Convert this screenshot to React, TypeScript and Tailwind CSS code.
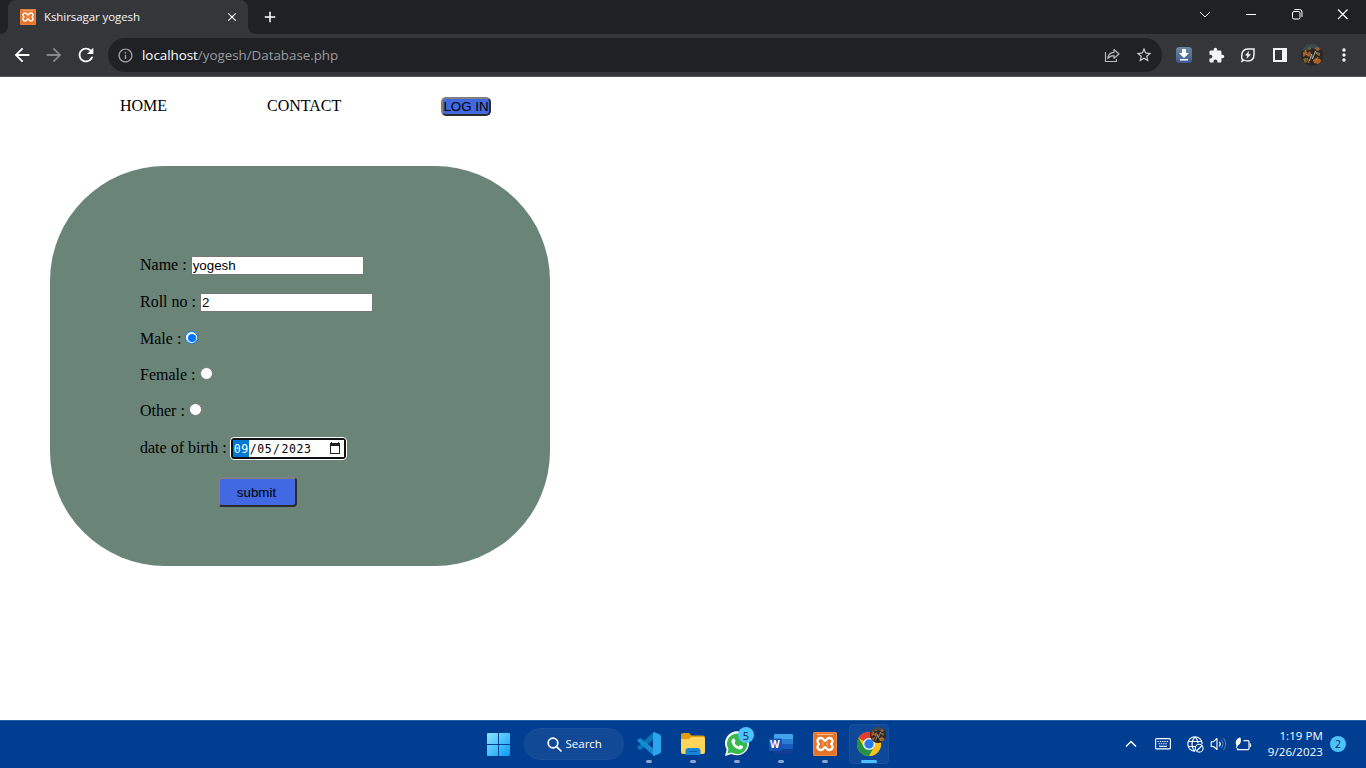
import React from "react";
import { MdArrowBack, MdArrowForward, MdRefresh, MdInfoOutline, MdStarBorder, MdExtension, MdMoreVert, MdAdd, MdClose } from "react-icons/md";

const UI = "font-['Open_Sans','Noto_Sans',sans-serif]";
const SERIF = "font-['Liberation_Serif',serif]";
const ARIAL = "font-['Liberation_Sans',sans-serif]";

function XamppIcon({ size }: { size: number }) {
  return (
    <svg width={size} height={size} viewBox="0 0 24 24">
      <rect width="24" height="24" rx="1.5" fill="#e8742a" />
      <rect x="0.5" y="0.5" width="23" height="23" rx="1.5" fill="none" stroke="#f08a45" />
      <path d="M4 2.500h16" stroke="#f8b98a" strokeWidth="1" />
      <path
        d="M12 8.800C10.500 8.800 10.500 6 7.900 6 5.800 6 4.500 7.300 4.500 9.200c0 1.300.7 2.100 1.500 2.800-.8.700-1.500 1.500-1.500 2.800 0 1.900 1.300 3.200 3.400 3.200 2.600 0 2.600-2.800 4.100-2.800s1.500 2.800 4.100 2.800c2.100 0 3.400-1.300 3.400-3.200 0-1.300-.7-2.100-1.500-2.800.8-.7 1.500-1.500 1.500-2.800 0-1.900-1.300-3.200-3.400-3.200-2.600 0-2.600 2.800-4.100 2.800Z"
        fill="none" stroke="#fff" strokeWidth="2.300" strokeLinejoin="round"
      />
      <path d="M9.200 9.800l1.300 2.200-1.300 2.200M14.800 9.800L13.500 12l1.300 2.200" fill="none" stroke="#fff" strokeWidth=".7" opacity=".6" />
    </svg>
  );
}

function Avatar({ size }: { size: number }) {
  return (
    <svg width={size} height={size} viewBox="0 0 22 22">
      <defs>
        <clipPath id={"av" + size}><circle cx="11" cy="11" r="11" /></clipPath>
      </defs>
      <g clipPath={"url(#av" + size + ")"}>
        <rect width="22" height="22" fill="#2c2722" />
        <path d="M0 0h22v5l-6 1-5-2-6 3-5-1Z" fill="#3d4b50" />
        <path d="M2 8l3-1 1 3 3-3 1 3-2 3-3-2-3 2ZM14 4l3-1 2 3-3 1ZM12 16l3-2 4 1 2 3-4 2-4-1Z" fill="#a7602c" />
        <path d="M2 15l3-1 1 4-2 1ZM16 8l3 1v3l-3-1ZM7 4l2-1 1 2-2 1Z" fill="#7d6b28" />
        <path d="M8.500 17l2-7 1 5 3-8 1 3" fill="none" stroke="#a5a596" strokeWidth="1" />
        <path d="M6 14l2 5M17 13l-3 5M4 6l2 3" stroke="#c47a2c" strokeWidth="1" />
      </g>
    </svg>
  );
}

function TitleBar() {
  return (
    <div className="flex h-[34px] bg-[#202124]">
      <div className="flex w-2 items-end bg-[#35363a]"><div className="h-full w-2 rounded-br-lg bg-[#202124]" /></div>
      <div className="flex w-60 items-center rounded-t-lg bg-[#35363a] pl-3 pr-[9px]">
        <XamppIcon size={16} />
        <span className={`${UI} ml-2 flex-1 whitespace-nowrap text-[11.5px] leading-4 tracking-[-0.08px] text-[#f4f4f5]`}>Kshirsagar yogesh</span>
        <MdClose size={14} color="#fff" />
      </div>
      <div className="w-2 bg-[#35363a]"><div className="h-full w-2 rounded-bl-lg bg-[#202124]" /></div>
      <div className="flex w-7 items-center justify-center"><MdAdd size={18} color="#fff" /></div>
      <div className="flex flex-1 justify-end">
        {[
          <path key="a" d="M6 8l5 5 5-5" />,
          <path key="b" d="M6 10.500h10" />,
          <g key="c"><rect x="6.500" y="7.500" width="7.500" height="7.500" rx="1.500" /><path d="M8.500 5.500h5a2.500 2.500 0 0 1 2.500 2.500v5" /></g>,
          <path key="d" d="M6 5.500l9.500 9.500M15.500 5.500L6 15" strokeWidth="1.200" />,
        ].map((icon, i) => (
          <div key={i} className="flex w-[46px] justify-center pt-[4px]">
            <svg width="22" height="22" viewBox="0 0 22 22" fill="none" stroke="#fff" strokeWidth="1">{icon}</svg>
          </div>
        ))}
      </div>
    </div>
  );
}

function Toolbar() {
  return (
    <div className="flex h-[43px] items-center border-b border-[#55565a] bg-[#35363a] px-1.5">
      <div className="flex w-8 justify-center"><MdArrowBack size={22} color="#fff" /></div>
      <div className="flex w-8 justify-center"><MdArrowForward size={22} color="#85868a" /></div>
      <div className="flex w-8 justify-center"><MdRefresh size={22} color="#fff" /></div>
      <div className="ml-1.5 flex h-[34px] flex-1 items-center rounded-full bg-[#202124] pl-[9px]">
        <MdInfoOutline size={17} color="#9aa0a6" />
        <span className={`${UI} ml-2 flex-1 whitespace-nowrap text-[13.4px] leading-5 tracking-[-0.03px] text-[#9a9b9e]`}>
          <span className="text-white">localhost</span>/yogesh/Database.php
        </span>
        <div className="flex w-8 justify-center">
          <svg width="18" height="18" viewBox="0 0 18 18" fill="none" stroke="#b6b8bb" strokeWidth="1.200">
            <path d="M2.500 6v9.500h11V13" />
            <path d="M4.800 12.500C5.200 8.500 7.500 6.500 11 6.300V3.500L16 8l-5 4.300V9.600c-2.800 0-4.700.9-6.200 2.900Z" strokeLinejoin="round" />
          </svg>
        </div>
        <div className="mr-0.5 flex w-8 justify-center"><MdStarBorder size={18} color="#c8cacd" /></div>
      </div>
      <div className="ml-1.5 flex w-8 justify-center">
        <svg width="16" height="16" viewBox="0 0 16 16">
          <defs><linearGradient id="dl" x1="0" y1="0" x2="0" y2="1"><stop stopColor="#71889f" /><stop offset="1" stopColor="#3c5b91" /></linearGradient></defs>
          <rect width="16" height="16" rx="3.500" fill="url(#dl)" />
          <path d="M6 2h4v4h3l-5 5-5-5h3ZM4 12h8v1.500H4Z" fill="#fff" />
        </svg>
      </div>
      <div className="flex w-8 justify-center"><MdExtension size={17} color="#f1f3f4" /></div>
      <div className="flex w-8 justify-center">
        <svg width="16" height="16" viewBox="0 0 16 16" fill="none" stroke="#f1f3f4" strokeWidth="1.500">
          <path d="M2.500 13.500C1 9.500 1 2 8 2h6v5.500c0 5-3.500 6.500-6.500 6.500-1.500 0-2.700-.3-3.700-1L1.300 15" />
          <path d="M9 3.800L5 8.500h2.300L6.500 12 11 7.200H8.500Z" fill="#f1f3f4" stroke="none" />
        </svg>
      </div>
      <div className="flex w-8 justify-center">
        <svg width="14" height="14" viewBox="0 0 14 14"><path fillRule="evenodd" d="M0 0h14v14H0ZM2 2v10h7V2Z" fill="#f1f3f4" /></svg>
      </div>
      <div className="flex w-8 justify-center"><Avatar size={22} /></div>
      <div className="flex w-8 justify-center"><MdMoreVert size={20} color="#f1f3f4" /></div>
    </div>
  );
}

function Radio({ checked }: { checked?: boolean }) {
  return checked ? (
    <span className="mt-[-3px] ml-1 flex size-[13px] items-center justify-center rounded-full border border-[#0075ff] bg-white"><span className="size-[8px] rounded-full bg-[#0075ff]" /></span>
  ) : (
    <span className="mt-[-3px] ml-1 size-[13px] rounded-full border border-[#767676] bg-white" />
  );
}

const BEVEL = "border-2 border-t-[#808080] border-l-[#808080] border-b-[#2b2b2b] border-r-[#2b2b2b] bg-[#4169e1]";

function Page() {
  return (
    <main className={`${SERIF} h-[643px] bg-white text-[16px] text-black`}>
      <nav className="flex h-[89px] items-start pt-[19px] pl-[120px] leading-[19px]">
        <span className="w-[147px]">HOME</span>
        <span className="w-[174px]">CONTACT</span>
        <button className={`${ARIAL} ${BEVEL} mt-[1px] flex h-[19px] w-[50px] items-center justify-center whitespace-nowrap rounded-[5px] text-[13.333px]`}>LOG IN</button>
      </nav>
      <form className="ml-[50px] flex h-[400px] w-[500px] flex-col rounded-[115px] bg-[#6a8478] pt-[90px] pl-[90px] leading-[18px]">
        <div className="flex h-[37px] items-start">
          <span>Name :</span>
          <span className={`${ARIAL} ml-[4px] h-[19px] w-[173px] border border-[#767676] bg-white pl-px text-[13.333px] leading-[18px]`}>yogesh</span>
        </div>
        <div className="flex h-[37px] items-start">
          <span>Roll no :</span>
          <span className={`${ARIAL} ml-[4px] h-[19px] w-[173px] border border-[#767676] bg-white pl-px text-[13.333px] leading-[17px]`}>2</span>
        </div>
        <div className="flex h-9 items-start"><span>Male :</span><span className="flex h-[18px] items-center"><Radio checked /></span></div>
        <div className="flex h-9 items-start"><span>Female :</span><span className="flex h-[18px] items-center"><Radio /></span></div>
        <div className="flex h-9 items-start"><span>Other :</span><span className="flex h-[18px] items-center"><Radio /></span></div>
        <div className="flex h-[39px] items-start">
          <span className="mt-px">date of birth :</span>
          <span className="-mt-[1px] ml-[3.100px] flex h-[23px] w-[117.500px] items-center rounded-[4px] border border-white bg-[#101010] p-[2px]">
            <span className="flex h-[17px] w-full items-center bg-white font-['DejaVu_Sans_Mono',monospace] text-[11.5px] leading-[18px] tracking-[0.58px]">
              <span className="h-[17px] w-4 bg-[#0078d7] pl-px text-white">09</span>
              <span className="pl-px">/</span>
              <span>05</span>
              <span className="px-[0.8px]">/</span>
              <span className="flex-1">2023</span>
              <svg className="mr-[3px]" width="12" height="13" viewBox="0 0 12 13"><path fillRule="evenodd" d="M1 1h1V0h1v1h6V0h1v1h1v11H1ZM2 4v7h8V4Z" fill="#222" /></svg>
            </span>
          </span>
        </div>
        <button className={`${ARIAL} ${BEVEL} ml-[78px] h-[30px] w-[79px] rounded-[4px] pr-[2px] pt-[2px] text-[13.333px]`}>submit</button>
      </form>
    </main>
  );
}

function Slot({ children, active }: { children: React.ReactNode; active?: boolean }) {
  return (
    <div className={active ? "relative flex h-10 w-10 items-center justify-center rounded border border-[#1b51a0] bg-[#104899]" : "relative flex h-10 w-10 items-center justify-center"}>
      {children}
      <span className={active ? "absolute bottom-0 h-[3px] w-4 rounded-full bg-[#4cc2ff]" : "absolute bottom-px h-[3px] w-1.5 rounded-full bg-[#8ca6d0]"} />
    </div>
  );
}

function Taskbar() {
  return (
    <footer className={`${UI} flex h-12 items-center border-t border-[#2a5da3] bg-[#003e92] pb-px text-white`}>
      <div className="flex flex-1 items-center pl-[487px]">
        <svg width="23" height="23" viewBox="0 0 24 24">
          <defs><linearGradient id="win" gradientUnits="userSpaceOnUse" x1="0" y1="0" x2="24" y2="24"><stop stopColor="#8ee5ff" /><stop offset="1" stopColor="#079bf5" /></linearGradient></defs>
          <path d="M0 1q0-1 1-1h10.500v11.500H0ZM12.500 0H23q1 0 1 1v10.500H12.500ZM0 12.500h11.500V24H1q-1 0-1-1ZM12.500 12.500H24V23q0 1-1 1H12.500Z" fill="url(#win)" />
        </svg>
        <div className="ml-[14px] flex h-8 w-[100px] items-center rounded-full border border-[#18509c] bg-[#124997] pl-[21.500px]">
          <svg width="15" height="15" viewBox="0 0 15 15" fill="none" stroke="#fff" strokeWidth="1.700" strokeLinecap="round"><circle cx="6" cy="6" r="4.800" /><path d="M9.600 9.600L14 14" /></svg>
          <span className="ml-1 text-[11.5px] leading-4">Search</span>
        </div>
        <div className="ml-[5px] flex gap-1">
          <Slot>
            <svg width="24" height="24" viewBox="0 0 24 24">
              <path d="M17 0v7L3.200 18.200.5 16.300v-1.500Z" fill="#0878bd" />
              <path d="M3.200 6L17 17v7L.5 9.300V7.800Z" fill="#168bd0" />
              <path d="M17 0l5.800 2.500q1.200.5 1.200 1.800v15.400q0 1.300-1.200 1.800L17 24l-1-1V1Z" fill="#2aa6ef" />
            </svg>
          </Slot>
          <Slot>
            <svg width="24" height="22" viewBox="0 0 24 22">
              <path d="M0 2q0-2 2-2h6l2.500 2.500H22q2 0 2 2V8H0Z" fill="#e19d0a" />
              <path d="M0 6h8l2.500-2H22q2 0 2 2v13q0 2-2 2H2q-2 0-2-2Z" fill="#ffd45a" />
              <path d="M4.500 22v-4q0-3 3-3h9q3 0 3 3v4Z" fill="#1684d8" /><path d="M8 18.500h8" stroke="#075ba8" />
            </svg>
          </Slot>
          <Slot>
            <svg width="26" height="26" viewBox="0 0 26 26">
              <path d="M1 25l1.700-6.500A12 12 0 1 1 7.500 23Z" fill="#fff" />
              <path d="M3.300 22.700l1.200-4.500A10.200 10.200 0 1 1 7.800 21.500Z" fill="#36b94d" />
              <path d="M9.400 7.500c-.6 0-2 1-1.900 3 .1 3.700 5 8 8.500 8 2 0 3-1.500 3-2.700 0-.4-.3-.6-2.500-1.700-.8-.4-1.200 1.500-2 1.300-1.700-.5-3.500-2.200-4-3.700-.1-.5 1.200-1.100 1-1.800l-1-2.200q-.2-.3-1.100-.2Z" fill="#fff" />
            </svg>
            <span className="absolute top-[3px] left-[21px] flex size-4 items-center justify-center rounded-full bg-[#4cc2ff] text-[11px] leading-none text-[#102238]">5</span>
          </Slot>
          <Slot>
            <svg width="24" height="24" viewBox="0 0 24 24">
              <path d="M6 2h17q1 0 1 1v4H5V3q0-1 1-1Z" fill="#41a5ee" /><path d="M5 7h19v5H5Z" fill="#2b7cd3" /><path d="M5 12h19v5H5Z" fill="#185abd" /><path d="M5 17h19v4q0 1-1 1H6q-1 0-1-1Z" fill="#103f91" />
              <rect y="6.500" width="13" height="12.500" rx="1" fill="#1851b4" />
            </svg>
            <span className="absolute top-[13px] left-[9px] text-[10px] leading-[14px] font-bold">W</span>
          </Slot>
          <Slot><XamppIcon size={24} /></Slot>
          <Slot active>
            <svg width="24" height="24" viewBox="0 0 24 24">
              <circle cx="12" cy="12" r="12" fill="#fbc116" />
              <path d="M12 12L1.600 6A12 12 0 0 1 22.400 6Z" fill="#e33b2e" />
              <path d="M1.600 6A12 12 0 0 0 12 24l5.200-9L6.800 15Z" fill="#229342" />
              <path d="M12 6h10.400A12 12 0 0 1 12 24l5.200-9Z" fill="#fbc116" />
              <circle cx="12" cy="12" r="6" fill="#fff" /><circle cx="12" cy="12" r="4.700" fill="#2877ee" />
            </svg>
            <span className="absolute top-[2px] left-5"><Avatar size={16} /></span>
          </Slot>
        </div>
      </div>
      <div className="flex h-full items-center pr-5">
        <svg width="12" height="8" viewBox="0 0 12 8" fill="none" stroke="#fff" strokeWidth="1.500"><path d="M1 6.500l5-5 5 5" /></svg>
        <svg className="ml-[18px]" width="16" height="12" viewBox="0 0 16 12" fill="none" stroke="#fff" strokeWidth="1.100"><rect x=".6" y=".6" width="14.800" height="10.300" rx="1" /><path d="M2.500 3.500h11M3.500 5.700h9" strokeDasharray="1.300 1" /><path d="M4 8.300h8" /></svg>
        <svg className="ml-4" width="17" height="17" viewBox="0 0 17 17" fill="none" stroke="#fff" strokeWidth="1.100">
          <path d="M8 15.200A7.200 7.200 0 1 1 15.200 8M1 5.500h13.500M1 10.500h7M8 .8c-4 4-4 10.500 0 14.500M8 .8c2 2 3 4 3 6.500" /><circle cx="12.200" cy="12.200" r="3.900" /><path d="M9.500 15l5.500-5.500" />
        </svg>
        <svg className="ml-[6px]" width="17" height="14" viewBox="0 0 17 14" fill="none" stroke="#fff" strokeWidth="1.100" strokeLinejoin="round">
          <path d="M1.200 4.700h2.300L7 1.500v11L3.500 9.500H1.200Z" /><path d="M9.300 4.800q2 2.200 0 4.500" /><path d="M11.400 3q3.200 4 0 8M13.500 1.200q4.500 5.800 0 11.600" stroke="#4d79b5" />
        </svg>
        <svg className="ml-[7px]" width="18" height="15" viewBox="0 0 18 15" fill="none" stroke="#fff" strokeWidth="1.200">
          <path d="M9.500 3.600H14q1 0 1 1v7q0 1-1 1H3.500V11" /><path d="M16.500 6.500v3.500" />
          <path d="M1.900 7C1.200 4 3.200 1.300 6.200.3c1.400 3.200.8 6.500-1.900 7.700L2.500 11 1.600 10.500 2.600 8.500Z" fill="#fff" stroke="none" />
        </svg>
        <div className="ml-[12px] w-[59px] whitespace-nowrap text-right text-[11.5px] leading-4 tracking-[0.08px]"><div>1:19 PM</div><div>9/26/2023</div></div>
        <span className="ml-[7px] flex size-4 items-center justify-center rounded-full bg-[#4cc2ff] text-[10.5px] leading-none text-[#123]">2</span>
      </div>
    </footer>
  );
}

export default function App() {
  return (
    <div className="flex h-[768px] w-[1366px] flex-col overflow-hidden">
      <TitleBar />
      <Toolbar />
      <Page />
      <Taskbar />
    </div>
  );
}
